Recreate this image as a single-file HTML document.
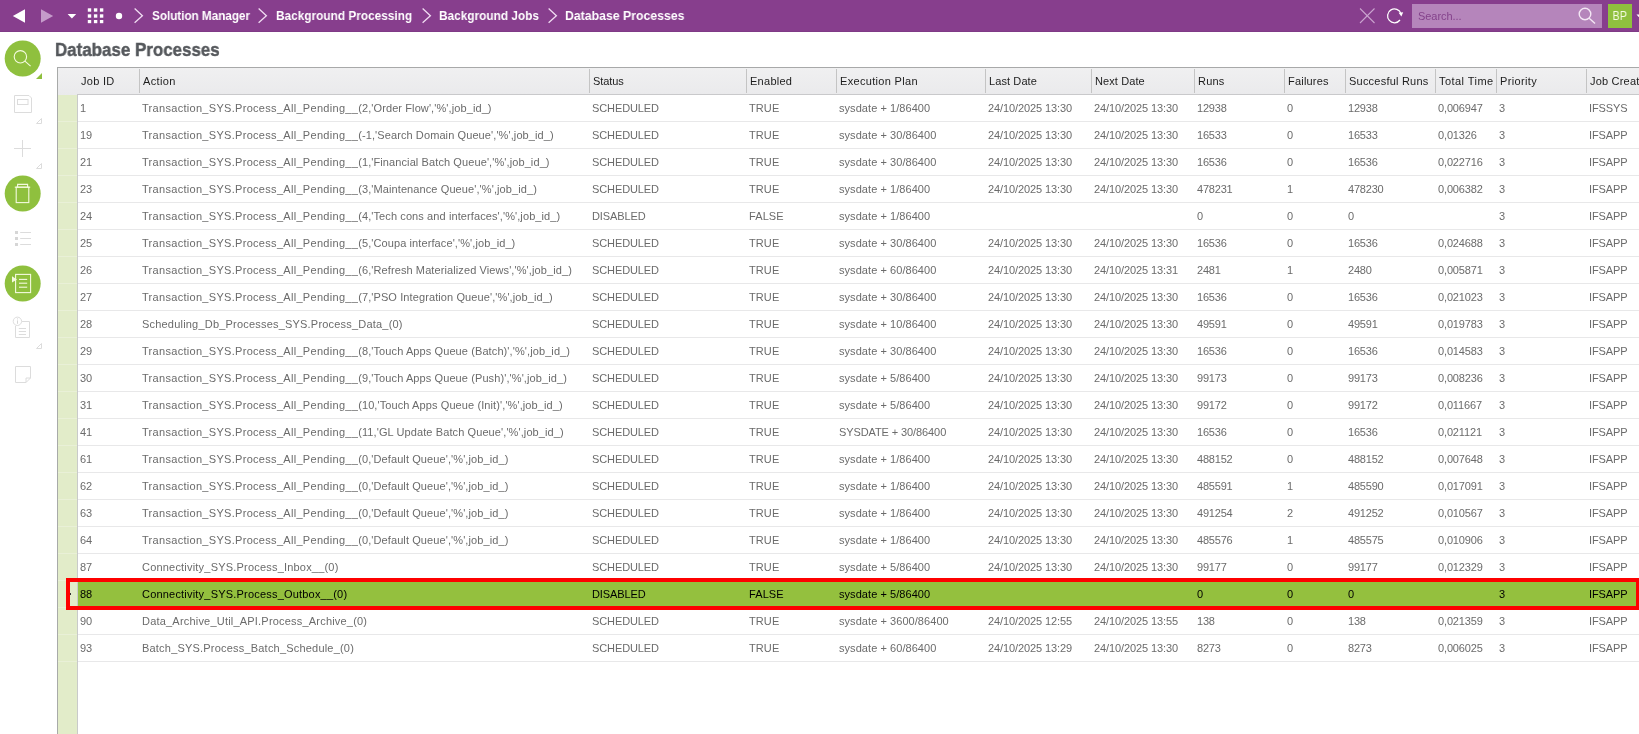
<!DOCTYPE html>
<html><head><meta charset="utf-8"><title>Database Processes</title>
<style>
*{box-sizing:border-box;margin:0;padding:0}
html,body{width:1639px;height:734px;overflow:hidden;background:#fff;font-family:"Liberation Sans",Arial,sans-serif;font-size:11px;color:#6b6b6b}
#top{position:absolute;left:0;top:0;width:1639px;height:32px;background:#873e8d;border-bottom:1px solid #7f3a86}
#top svg{position:absolute;left:0;top:0;z-index:2}
.bc{position:absolute;top:8px;height:16px;line-height:16px;font-weight:bold;font-size:13.5px;color:#fff;white-space:nowrap;transform-origin:0 50%;transform:scaleX(.877)}
#search{position:absolute;left:1412px;top:4px;width:190px;height:24px;background:#b585bb}
#search span{position:absolute;left:6px;top:3.5px;font-size:11px;line-height:16px;color:#84428b;letter-spacing:-.05px}
#user{position:absolute;left:1608px;top:4px;width:24px;height:24px;background:#8fc03e;color:#f4fbe2;font-size:13px;line-height:24px;text-align:center}
#user span{display:inline-block;transform:scaleX(.82)}
#title{position:absolute;left:55px;top:37px;height:26px;line-height:26px;font-size:19.2px;font-weight:bold;color:#55585c;white-space:nowrap;transform-origin:0 50%;transform:scaleX(.882);-webkit-text-stroke:.45px #55585c}
#side{position:absolute;left:0;top:32px;width:56px;height:702px}
#side svg{position:absolute;left:0;top:0}
#grid{position:absolute;left:57px;top:67px;width:1582px;height:667px;border-left:1px solid #a8aaa9;border-top:1px solid #a8a9a9;background:#fff}
.thead{position:absolute;left:0;top:0;width:1581px;height:27px;background:linear-gradient(#f0f0f1,#eaeaec)}
.h{position:absolute;top:5px;line-height:16px;font-size:11px;color:#1d1d1d;white-space:nowrap}
.hs{position:absolute;top:1px;width:1px;height:24px;background:#c4c4c4}
#marker{position:absolute;left:58px;top:95px;width:19px;height:639px;background:#e2ecc9}
#bodyb{position:absolute;left:77px;top:94px;width:1562px;height:640px;border-left:1px solid #c9caca;border-top:1px solid #c9c9cb}
.row{position:absolute;left:78px;width:1561px;height:27px;border-bottom:1px solid #e8e8e9}
.row::before{content:"";position:absolute;left:-20px;bottom:-1px;width:19px;height:1px;background:#e9f0d7}
.row,.h,.bc,#title,#search span,#user span{will-change:transform}
.c{position:absolute;top:5px;line-height:16px;white-space:nowrap}
.p{letter-spacing:.3px}
.sel{background:#94c03e;color:#000;border-bottom-color:#94c03e}
#red{position:absolute;left:66px;top:578px;width:1574px;height:32px;border:4px solid #fe0000}
</style></head><body>
<div id="top">
<svg width="1639" height="31" viewBox="0 0 1639 31">
<polygon points="25,9.2 25,22.8 12.8,16" fill="#fff"/>
<polygon points="41,9.2 41,22.8 53.2,16" fill="#c59bca"/>
<polygon points="67.6,14 76.2,14 71.9,18.4" fill="#fff"/>
<g fill="#fff">
<rect x="87.8" y="8.3" width="3.4" height="3.4"/><rect x="93.9" y="8.3" width="3.4" height="3.4"/><rect x="99.9" y="8.3" width="3.4" height="3.4"/>
<rect x="87.8" y="14.3" width="3.4" height="3.4"/><rect x="93.9" y="14.3" width="3.4" height="3.4"/><rect x="99.9" y="14.3" width="3.4" height="3.4"/>
<rect x="87.8" y="20" width="3.4" height="3.2"/><rect x="93.9" y="20" width="3.4" height="3.2"/><rect x="99.9" y="20" width="3.4" height="3.2"/>
</g>
<circle cx="119" cy="16" r="3.2" fill="#fff"/>
<g fill="none" stroke="#f0dcf2" stroke-width="1.3">
<polyline points="134.6,8.6 142.4,15.7 134.6,22.8"/>
<polyline points="258.6,8.6 266.4,15.7 258.6,22.8"/>
<polyline points="422.6,8.6 430.4,15.7 422.6,22.8"/>
<polyline points="548.6,8.6 556.4,15.7 548.6,22.8"/>
</g>
<g stroke="#caa4cf" stroke-width="1.1" fill="none"><line x1="1360" y1="8.5" x2="1374.5" y2="23"/><line x1="1374.5" y1="8.5" x2="1360" y2="23"/></g>
<path d="M1401.0,13.6 A6.9,6.9 0 1 0 1400.0,20.0" fill="none" stroke="#fff" stroke-width="1.25"/>
<polygon points="1398.6,12.8 1403.2,12.2 1401.4,16.4" fill="#fff"/>
<g fill="none" stroke="#f3e6f4" stroke-width="1.4"><circle cx="1585" cy="14" r="5.8"/><line x1="1589.2" y1="18.2" x2="1595" y2="23.6"/></g>
<polygon points="1636.5,14.5 1641,14.5 1638.7,17" fill="#fff"/>

</svg>
<span class="bc" style="left:151.8px;letter-spacing:-.1px">Solution Manager</span>
<span class="bc" style="left:275.8px">Background Processing</span>
<span class="bc" style="left:438.8px">Background Jobs</span>
<span class="bc" style="left:565px;transform:scaleX(.91)">Database Processes</span>
<div id="search"><span>Search...</span></div>
<div id="user"><span>BP</span></div>
</div>
<div id="title">Database Processes</div>
<div id="side"><svg width="56" height="702" viewBox="0 32 56 702">
<g fill="#8fc03e"><circle cx="22.7" cy="58.5" r="18"/><circle cx="22.7" cy="193.5" r="18"/><circle cx="22.7" cy="283.5" r="18"/>
<polygon points="42,73 42,79 36,79"/></g>
<g fill="none" stroke="#f4fadf" stroke-width="1.1">
<circle cx="20.4" cy="56.8" r="6.2"/><line x1="24.9" y1="61.2" x2="30.6" y2="66.2"/>
<rect x="16.2" y="187.2" width="12.6" height="15.4"/><line x1="14.8" y1="187.2" x2="30.2" y2="187.2"/><polyline points="17.6,187.2 17.6,184.4 27.6,184.4 27.6,187.2"/>
<rect x="15.6" y="274.4" width="15" height="18.2"/><line x1="19" y1="279.4" x2="27.2" y2="279.4"/><line x1="19" y1="283.2" x2="27.2" y2="283.2"/><line x1="19" y1="287.2" x2="27.2" y2="287.2"/>
</g>
<polygon points="12,276.2 17,279.4 12,282.6" fill="#f4fadf"/>
<g fill="none" stroke="#dcdcdc" stroke-width="1">
<path d="M14.5,95.5 H29 L31.5,98 V112.5 H14.5 Z"/><rect x="17.5" y="99.5" width="10.5" height="5"/>
<polygon points="41.5,118.5 41.5,123.5 36.5,123.5"/>
<line x1="22.5" y1="140" x2="22.5" y2="157"/><line x1="14" y1="148.5" x2="31" y2="148.5"/>
<polygon points="41.5,163.5 41.5,168.5 36.5,168.5"/>
<line x1="20.2" y1="232.5" x2="31" y2="232.5"/><line x1="20.2" y1="238.5" x2="31" y2="238.5"/><line x1="20.2" y1="244.5" x2="31" y2="244.5"/>
<path d="M22,321.5 H29.5 V337.5 H15.5 V326"/><circle cx="17.4" cy="321.3" r="4.2" fill="#fff"/>
<line x1="18.8" y1="328.5" x2="26" y2="328.5"/><line x1="18.8" y1="331.5" x2="26" y2="331.5"/><line x1="18.8" y1="334.5" x2="26" y2="334.5"/>
<polygon points="41.5,343.5 41.5,348.5 36.5,348.5"/>
<path d="M15.5,366.5 H30.5 V378 L26,382.5 H15.5 Z"/><path d="M30.5,378 H26 V382.5"/>
</g>
<g fill="#d6d6d6"><rect x="15" y="231" width="3" height="3"/><rect x="15" y="237" width="3" height="3"/><rect x="15" y="243" width="3" height="3"/>
<rect x="17" y="320.4" width="1" height="3.4"/><rect x="17" y="318.4" width="1" height="1"/></g>

</svg></div>
<div id="grid">
<div class="thead">
<span class="h" style="left:23px;letter-spacing:0.3px">Job ID</span>
<i class="hs" style="left:81px"></i><span class="h" style="left:85px;letter-spacing:0.37px">Action</span>
<i class="hs" style="left:531px"></i><span class="h" style="left:535px;letter-spacing:-0.1px">Status</span>
<i class="hs" style="left:688px"></i><span class="h" style="left:692px;letter-spacing:0.27px">Enabled</span>
<i class="hs" style="left:778px"></i><span class="h" style="left:782px;letter-spacing:0.32px">Execution Plan</span>
<i class="hs" style="left:927px"></i><span class="h" style="left:931px;letter-spacing:0.1px">Last Date</span>
<i class="hs" style="left:1033px"></i><span class="h" style="left:1037px;letter-spacing:0.1px">Next Date</span>
<i class="hs" style="left:1136px"></i><span class="h" style="left:1140px;letter-spacing:0.2px">Runs</span>
<i class="hs" style="left:1226px"></i><span class="h" style="left:1230px;letter-spacing:0.2px">Failures</span>
<i class="hs" style="left:1287px"></i><span class="h" style="left:1291px;letter-spacing:0.22px">Succesful Runs</span>
<i class="hs" style="left:1377px"></i><span class="h" style="left:1381px;letter-spacing:0.45px">Total Time</span>
<i class="hs" style="left:1438px"></i><span class="h" style="left:1442px;letter-spacing:0.35px">Priority</span>
<i class="hs" style="left:1528px"></i><span class="h" style="left:1532px;letter-spacing:0.2px">Job Creator</span>
</div>
</div>
<div id="marker"></div>
<div id="bodyb"></div>

<div class="row" style="top:95px">
<span class="c" style="left:2px;letter-spacing:-0.1px">1</span>
<span class="c" style="left:64px;letter-spacing:.1px"><span class="p">Transaction_SYS.Process_All_Pending__</span>(2,'Order Flow','%',job_id_)</span>
<span class="c" style="left:514px;letter-spacing:-0.1px">SCHEDULED</span>
<span class="c" style="left:671px;letter-spacing:0.1px">TRUE</span>
<span class="c" style="left:761px;letter-spacing:0.06px">sysdate + 1/86400</span>
<span class="c" style="left:910px;letter-spacing:-0.1px">24/10/2025 13:30</span>
<span class="c" style="left:1016px;letter-spacing:-0.1px">24/10/2025 13:30</span>
<span class="c" style="left:1119px;letter-spacing:-0.2px">12938</span>
<span class="c" style="left:1209px;letter-spacing:0px">0</span>
<span class="c" style="left:1270px;letter-spacing:-0.2px">12938</span>
<span class="c" style="left:1360px;letter-spacing:-0.14px">0,006947</span>
<span class="c" style="left:1421px;letter-spacing:0px">3</span>
<span class="c" style="left:1511px;letter-spacing:-0.12px">IFSSYS</span>
</div>
<div class="row" style="top:122px">
<span class="c" style="left:2px;letter-spacing:-0.1px">19</span>
<span class="c" style="left:64px;letter-spacing:.1px"><span class="p">Transaction_SYS.Process_All_Pending__</span>(-1,'Search Domain Queue','%',job_id_)</span>
<span class="c" style="left:514px;letter-spacing:-0.1px">SCHEDULED</span>
<span class="c" style="left:671px;letter-spacing:0.1px">TRUE</span>
<span class="c" style="left:761px;letter-spacing:0.06px">sysdate + 30/86400</span>
<span class="c" style="left:910px;letter-spacing:-0.1px">24/10/2025 13:30</span>
<span class="c" style="left:1016px;letter-spacing:-0.1px">24/10/2025 13:30</span>
<span class="c" style="left:1119px;letter-spacing:-0.2px">16533</span>
<span class="c" style="left:1209px;letter-spacing:0px">0</span>
<span class="c" style="left:1270px;letter-spacing:-0.2px">16533</span>
<span class="c" style="left:1360px;letter-spacing:-0.14px">0,01326</span>
<span class="c" style="left:1421px;letter-spacing:0px">3</span>
<span class="c" style="left:1511px;letter-spacing:-0.12px">IFSAPP</span>
</div>
<div class="row" style="top:149px">
<span class="c" style="left:2px;letter-spacing:-0.1px">21</span>
<span class="c" style="left:64px;letter-spacing:.1px"><span class="p">Transaction_SYS.Process_All_Pending__</span>(1,'Financial Batch Queue','%',job_id_)</span>
<span class="c" style="left:514px;letter-spacing:-0.1px">SCHEDULED</span>
<span class="c" style="left:671px;letter-spacing:0.1px">TRUE</span>
<span class="c" style="left:761px;letter-spacing:0.06px">sysdate + 30/86400</span>
<span class="c" style="left:910px;letter-spacing:-0.1px">24/10/2025 13:30</span>
<span class="c" style="left:1016px;letter-spacing:-0.1px">24/10/2025 13:30</span>
<span class="c" style="left:1119px;letter-spacing:-0.2px">16536</span>
<span class="c" style="left:1209px;letter-spacing:0px">0</span>
<span class="c" style="left:1270px;letter-spacing:-0.2px">16536</span>
<span class="c" style="left:1360px;letter-spacing:-0.14px">0,022716</span>
<span class="c" style="left:1421px;letter-spacing:0px">3</span>
<span class="c" style="left:1511px;letter-spacing:-0.12px">IFSAPP</span>
</div>
<div class="row" style="top:176px">
<span class="c" style="left:2px;letter-spacing:-0.1px">23</span>
<span class="c" style="left:64px;letter-spacing:.1px"><span class="p">Transaction_SYS.Process_All_Pending__</span>(3,'Maintenance Queue','%',job_id_)</span>
<span class="c" style="left:514px;letter-spacing:-0.1px">SCHEDULED</span>
<span class="c" style="left:671px;letter-spacing:0.1px">TRUE</span>
<span class="c" style="left:761px;letter-spacing:0.06px">sysdate + 1/86400</span>
<span class="c" style="left:910px;letter-spacing:-0.1px">24/10/2025 13:30</span>
<span class="c" style="left:1016px;letter-spacing:-0.1px">24/10/2025 13:30</span>
<span class="c" style="left:1119px;letter-spacing:-0.2px">478231</span>
<span class="c" style="left:1209px;letter-spacing:0px">1</span>
<span class="c" style="left:1270px;letter-spacing:-0.2px">478230</span>
<span class="c" style="left:1360px;letter-spacing:-0.14px">0,006382</span>
<span class="c" style="left:1421px;letter-spacing:0px">3</span>
<span class="c" style="left:1511px;letter-spacing:-0.12px">IFSAPP</span>
</div>
<div class="row" style="top:203px">
<span class="c" style="left:2px;letter-spacing:-0.1px">24</span>
<span class="c" style="left:64px;letter-spacing:.1px"><span class="p">Transaction_SYS.Process_All_Pending__</span>(4,'Tech cons and interfaces','%',job_id_)</span>
<span class="c" style="left:514px;letter-spacing:-0.1px">DISABLED</span>
<span class="c" style="left:671px;letter-spacing:0.1px">FALSE</span>
<span class="c" style="left:761px;letter-spacing:0.06px">sysdate + 1/86400</span>
<span class="c" style="left:1119px;letter-spacing:-0.2px">0</span>
<span class="c" style="left:1209px;letter-spacing:0px">0</span>
<span class="c" style="left:1270px;letter-spacing:-0.2px">0</span>
<span class="c" style="left:1421px;letter-spacing:0px">3</span>
<span class="c" style="left:1511px;letter-spacing:-0.12px">IFSAPP</span>
</div>
<div class="row" style="top:230px">
<span class="c" style="left:2px;letter-spacing:-0.1px">25</span>
<span class="c" style="left:64px;letter-spacing:.1px"><span class="p">Transaction_SYS.Process_All_Pending__</span>(5,'Coupa interface','%',job_id_)</span>
<span class="c" style="left:514px;letter-spacing:-0.1px">SCHEDULED</span>
<span class="c" style="left:671px;letter-spacing:0.1px">TRUE</span>
<span class="c" style="left:761px;letter-spacing:0.06px">sysdate + 30/86400</span>
<span class="c" style="left:910px;letter-spacing:-0.1px">24/10/2025 13:30</span>
<span class="c" style="left:1016px;letter-spacing:-0.1px">24/10/2025 13:30</span>
<span class="c" style="left:1119px;letter-spacing:-0.2px">16536</span>
<span class="c" style="left:1209px;letter-spacing:0px">0</span>
<span class="c" style="left:1270px;letter-spacing:-0.2px">16536</span>
<span class="c" style="left:1360px;letter-spacing:-0.14px">0,024688</span>
<span class="c" style="left:1421px;letter-spacing:0px">3</span>
<span class="c" style="left:1511px;letter-spacing:-0.12px">IFSAPP</span>
</div>
<div class="row" style="top:257px">
<span class="c" style="left:2px;letter-spacing:-0.1px">26</span>
<span class="c" style="left:64px;letter-spacing:.1px"><span class="p">Transaction_SYS.Process_All_Pending__</span>(6,'Refresh Materialized Views','%',job_id_)</span>
<span class="c" style="left:514px;letter-spacing:-0.1px">SCHEDULED</span>
<span class="c" style="left:671px;letter-spacing:0.1px">TRUE</span>
<span class="c" style="left:761px;letter-spacing:0.06px">sysdate + 60/86400</span>
<span class="c" style="left:910px;letter-spacing:-0.1px">24/10/2025 13:30</span>
<span class="c" style="left:1016px;letter-spacing:-0.1px">24/10/2025 13:31</span>
<span class="c" style="left:1119px;letter-spacing:-0.2px">2481</span>
<span class="c" style="left:1209px;letter-spacing:0px">1</span>
<span class="c" style="left:1270px;letter-spacing:-0.2px">2480</span>
<span class="c" style="left:1360px;letter-spacing:-0.14px">0,005871</span>
<span class="c" style="left:1421px;letter-spacing:0px">3</span>
<span class="c" style="left:1511px;letter-spacing:-0.12px">IFSAPP</span>
</div>
<div class="row" style="top:284px">
<span class="c" style="left:2px;letter-spacing:-0.1px">27</span>
<span class="c" style="left:64px;letter-spacing:.1px"><span class="p">Transaction_SYS.Process_All_Pending__</span>(7,'PSO Integration Queue','%',job_id_)</span>
<span class="c" style="left:514px;letter-spacing:-0.1px">SCHEDULED</span>
<span class="c" style="left:671px;letter-spacing:0.1px">TRUE</span>
<span class="c" style="left:761px;letter-spacing:0.06px">sysdate + 30/86400</span>
<span class="c" style="left:910px;letter-spacing:-0.1px">24/10/2025 13:30</span>
<span class="c" style="left:1016px;letter-spacing:-0.1px">24/10/2025 13:30</span>
<span class="c" style="left:1119px;letter-spacing:-0.2px">16536</span>
<span class="c" style="left:1209px;letter-spacing:0px">0</span>
<span class="c" style="left:1270px;letter-spacing:-0.2px">16536</span>
<span class="c" style="left:1360px;letter-spacing:-0.14px">0,021023</span>
<span class="c" style="left:1421px;letter-spacing:0px">3</span>
<span class="c" style="left:1511px;letter-spacing:-0.12px">IFSAPP</span>
</div>
<div class="row" style="top:311px">
<span class="c" style="left:2px;letter-spacing:-0.1px">28</span>
<span class="c" style="left:64px;letter-spacing:0.2px">Scheduling_Db_Processes_SYS.Process_Data_(0)</span>
<span class="c" style="left:514px;letter-spacing:-0.1px">SCHEDULED</span>
<span class="c" style="left:671px;letter-spacing:0.1px">TRUE</span>
<span class="c" style="left:761px;letter-spacing:0.06px">sysdate + 10/86400</span>
<span class="c" style="left:910px;letter-spacing:-0.1px">24/10/2025 13:30</span>
<span class="c" style="left:1016px;letter-spacing:-0.1px">24/10/2025 13:30</span>
<span class="c" style="left:1119px;letter-spacing:-0.2px">49591</span>
<span class="c" style="left:1209px;letter-spacing:0px">0</span>
<span class="c" style="left:1270px;letter-spacing:-0.2px">49591</span>
<span class="c" style="left:1360px;letter-spacing:-0.14px">0,019783</span>
<span class="c" style="left:1421px;letter-spacing:0px">3</span>
<span class="c" style="left:1511px;letter-spacing:-0.12px">IFSAPP</span>
</div>
<div class="row" style="top:338px">
<span class="c" style="left:2px;letter-spacing:-0.1px">29</span>
<span class="c" style="left:64px;letter-spacing:.1px"><span class="p">Transaction_SYS.Process_All_Pending__</span>(8,'Touch Apps Queue (Batch)','%',job_id_)</span>
<span class="c" style="left:514px;letter-spacing:-0.1px">SCHEDULED</span>
<span class="c" style="left:671px;letter-spacing:0.1px">TRUE</span>
<span class="c" style="left:761px;letter-spacing:0.06px">sysdate + 30/86400</span>
<span class="c" style="left:910px;letter-spacing:-0.1px">24/10/2025 13:30</span>
<span class="c" style="left:1016px;letter-spacing:-0.1px">24/10/2025 13:30</span>
<span class="c" style="left:1119px;letter-spacing:-0.2px">16536</span>
<span class="c" style="left:1209px;letter-spacing:0px">0</span>
<span class="c" style="left:1270px;letter-spacing:-0.2px">16536</span>
<span class="c" style="left:1360px;letter-spacing:-0.14px">0,014583</span>
<span class="c" style="left:1421px;letter-spacing:0px">3</span>
<span class="c" style="left:1511px;letter-spacing:-0.12px">IFSAPP</span>
</div>
<div class="row" style="top:365px">
<span class="c" style="left:2px;letter-spacing:-0.1px">30</span>
<span class="c" style="left:64px;letter-spacing:.1px"><span class="p">Transaction_SYS.Process_All_Pending__</span>(9,'Touch Apps Queue (Push)','%',job_id_)</span>
<span class="c" style="left:514px;letter-spacing:-0.1px">SCHEDULED</span>
<span class="c" style="left:671px;letter-spacing:0.1px">TRUE</span>
<span class="c" style="left:761px;letter-spacing:0.06px">sysdate + 5/86400</span>
<span class="c" style="left:910px;letter-spacing:-0.1px">24/10/2025 13:30</span>
<span class="c" style="left:1016px;letter-spacing:-0.1px">24/10/2025 13:30</span>
<span class="c" style="left:1119px;letter-spacing:-0.2px">99173</span>
<span class="c" style="left:1209px;letter-spacing:0px">0</span>
<span class="c" style="left:1270px;letter-spacing:-0.2px">99173</span>
<span class="c" style="left:1360px;letter-spacing:-0.14px">0,008236</span>
<span class="c" style="left:1421px;letter-spacing:0px">3</span>
<span class="c" style="left:1511px;letter-spacing:-0.12px">IFSAPP</span>
</div>
<div class="row" style="top:392px">
<span class="c" style="left:2px;letter-spacing:-0.1px">31</span>
<span class="c" style="left:64px;letter-spacing:.1px"><span class="p">Transaction_SYS.Process_All_Pending__</span>(10,'Touch Apps Queue (Init)','%',job_id_)</span>
<span class="c" style="left:514px;letter-spacing:-0.1px">SCHEDULED</span>
<span class="c" style="left:671px;letter-spacing:0.1px">TRUE</span>
<span class="c" style="left:761px;letter-spacing:0.06px">sysdate + 5/86400</span>
<span class="c" style="left:910px;letter-spacing:-0.1px">24/10/2025 13:30</span>
<span class="c" style="left:1016px;letter-spacing:-0.1px">24/10/2025 13:30</span>
<span class="c" style="left:1119px;letter-spacing:-0.2px">99172</span>
<span class="c" style="left:1209px;letter-spacing:0px">0</span>
<span class="c" style="left:1270px;letter-spacing:-0.2px">99172</span>
<span class="c" style="left:1360px;letter-spacing:-0.14px">0,011667</span>
<span class="c" style="left:1421px;letter-spacing:0px">3</span>
<span class="c" style="left:1511px;letter-spacing:-0.12px">IFSAPP</span>
</div>
<div class="row" style="top:419px">
<span class="c" style="left:2px;letter-spacing:-0.1px">41</span>
<span class="c" style="left:64px;letter-spacing:.1px"><span class="p">Transaction_SYS.Process_All_Pending__</span>(11,'GL Update Batch Queue','%',job_id_)</span>
<span class="c" style="left:514px;letter-spacing:-0.1px">SCHEDULED</span>
<span class="c" style="left:671px;letter-spacing:0.1px">TRUE</span>
<span class="c" style="left:761px;letter-spacing:-.1px">SYSDATE + 30/86400</span>
<span class="c" style="left:910px;letter-spacing:-0.1px">24/10/2025 13:30</span>
<span class="c" style="left:1016px;letter-spacing:-0.1px">24/10/2025 13:30</span>
<span class="c" style="left:1119px;letter-spacing:-0.2px">16536</span>
<span class="c" style="left:1209px;letter-spacing:0px">0</span>
<span class="c" style="left:1270px;letter-spacing:-0.2px">16536</span>
<span class="c" style="left:1360px;letter-spacing:-0.14px">0,021121</span>
<span class="c" style="left:1421px;letter-spacing:0px">3</span>
<span class="c" style="left:1511px;letter-spacing:-0.12px">IFSAPP</span>
</div>
<div class="row" style="top:446px">
<span class="c" style="left:2px;letter-spacing:-0.1px">61</span>
<span class="c" style="left:64px;letter-spacing:.1px"><span class="p">Transaction_SYS.Process_All_Pending__</span>(0,'Default Queue','%',job_id_)</span>
<span class="c" style="left:514px;letter-spacing:-0.1px">SCHEDULED</span>
<span class="c" style="left:671px;letter-spacing:0.1px">TRUE</span>
<span class="c" style="left:761px;letter-spacing:0.06px">sysdate + 1/86400</span>
<span class="c" style="left:910px;letter-spacing:-0.1px">24/10/2025 13:30</span>
<span class="c" style="left:1016px;letter-spacing:-0.1px">24/10/2025 13:30</span>
<span class="c" style="left:1119px;letter-spacing:-0.2px">488152</span>
<span class="c" style="left:1209px;letter-spacing:0px">0</span>
<span class="c" style="left:1270px;letter-spacing:-0.2px">488152</span>
<span class="c" style="left:1360px;letter-spacing:-0.14px">0,007648</span>
<span class="c" style="left:1421px;letter-spacing:0px">3</span>
<span class="c" style="left:1511px;letter-spacing:-0.12px">IFSAPP</span>
</div>
<div class="row" style="top:473px">
<span class="c" style="left:2px;letter-spacing:-0.1px">62</span>
<span class="c" style="left:64px;letter-spacing:.1px"><span class="p">Transaction_SYS.Process_All_Pending__</span>(0,'Default Queue','%',job_id_)</span>
<span class="c" style="left:514px;letter-spacing:-0.1px">SCHEDULED</span>
<span class="c" style="left:671px;letter-spacing:0.1px">TRUE</span>
<span class="c" style="left:761px;letter-spacing:0.06px">sysdate + 1/86400</span>
<span class="c" style="left:910px;letter-spacing:-0.1px">24/10/2025 13:30</span>
<span class="c" style="left:1016px;letter-spacing:-0.1px">24/10/2025 13:30</span>
<span class="c" style="left:1119px;letter-spacing:-0.2px">485591</span>
<span class="c" style="left:1209px;letter-spacing:0px">1</span>
<span class="c" style="left:1270px;letter-spacing:-0.2px">485590</span>
<span class="c" style="left:1360px;letter-spacing:-0.14px">0,017091</span>
<span class="c" style="left:1421px;letter-spacing:0px">3</span>
<span class="c" style="left:1511px;letter-spacing:-0.12px">IFSAPP</span>
</div>
<div class="row" style="top:500px">
<span class="c" style="left:2px;letter-spacing:-0.1px">63</span>
<span class="c" style="left:64px;letter-spacing:.1px"><span class="p">Transaction_SYS.Process_All_Pending__</span>(0,'Default Queue','%',job_id_)</span>
<span class="c" style="left:514px;letter-spacing:-0.1px">SCHEDULED</span>
<span class="c" style="left:671px;letter-spacing:0.1px">TRUE</span>
<span class="c" style="left:761px;letter-spacing:0.06px">sysdate + 1/86400</span>
<span class="c" style="left:910px;letter-spacing:-0.1px">24/10/2025 13:30</span>
<span class="c" style="left:1016px;letter-spacing:-0.1px">24/10/2025 13:30</span>
<span class="c" style="left:1119px;letter-spacing:-0.2px">491254</span>
<span class="c" style="left:1209px;letter-spacing:0px">2</span>
<span class="c" style="left:1270px;letter-spacing:-0.2px">491252</span>
<span class="c" style="left:1360px;letter-spacing:-0.14px">0,010567</span>
<span class="c" style="left:1421px;letter-spacing:0px">3</span>
<span class="c" style="left:1511px;letter-spacing:-0.12px">IFSAPP</span>
</div>
<div class="row" style="top:527px">
<span class="c" style="left:2px;letter-spacing:-0.1px">64</span>
<span class="c" style="left:64px;letter-spacing:.1px"><span class="p">Transaction_SYS.Process_All_Pending__</span>(0,'Default Queue','%',job_id_)</span>
<span class="c" style="left:514px;letter-spacing:-0.1px">SCHEDULED</span>
<span class="c" style="left:671px;letter-spacing:0.1px">TRUE</span>
<span class="c" style="left:761px;letter-spacing:0.06px">sysdate + 1/86400</span>
<span class="c" style="left:910px;letter-spacing:-0.1px">24/10/2025 13:30</span>
<span class="c" style="left:1016px;letter-spacing:-0.1px">24/10/2025 13:30</span>
<span class="c" style="left:1119px;letter-spacing:-0.2px">485576</span>
<span class="c" style="left:1209px;letter-spacing:0px">1</span>
<span class="c" style="left:1270px;letter-spacing:-0.2px">485575</span>
<span class="c" style="left:1360px;letter-spacing:-0.14px">0,010906</span>
<span class="c" style="left:1421px;letter-spacing:0px">3</span>
<span class="c" style="left:1511px;letter-spacing:-0.12px">IFSAPP</span>
</div>
<div class="row" style="top:554px">
<span class="c" style="left:2px;letter-spacing:-0.1px">87</span>
<span class="c" style="left:64px;letter-spacing:0.2px">Connectivity_SYS.Process_Inbox__(0)</span>
<span class="c" style="left:514px;letter-spacing:-0.1px">SCHEDULED</span>
<span class="c" style="left:671px;letter-spacing:0.1px">TRUE</span>
<span class="c" style="left:761px;letter-spacing:0.06px">sysdate + 5/86400</span>
<span class="c" style="left:910px;letter-spacing:-0.1px">24/10/2025 13:30</span>
<span class="c" style="left:1016px;letter-spacing:-0.1px">24/10/2025 13:30</span>
<span class="c" style="left:1119px;letter-spacing:-0.2px">99177</span>
<span class="c" style="left:1209px;letter-spacing:0px">0</span>
<span class="c" style="left:1270px;letter-spacing:-0.2px">99177</span>
<span class="c" style="left:1360px;letter-spacing:-0.14px">0,012329</span>
<span class="c" style="left:1421px;letter-spacing:0px">3</span>
<span class="c" style="left:1511px;letter-spacing:-0.12px">IFSAPP</span>
</div>
<div class="row sel" style="top:581px">
<span class="c" style="left:2px;letter-spacing:-0.1px">88</span>
<span class="c" style="left:64px;letter-spacing:0.2px">Connectivity_SYS.Process_Outbox__(0)</span>
<span class="c" style="left:514px;letter-spacing:-0.1px">DISABLED</span>
<span class="c" style="left:671px;letter-spacing:0.1px">FALSE</span>
<span class="c" style="left:761px;letter-spacing:0.06px">sysdate + 5/86400</span>
<span class="c" style="left:1119px;letter-spacing:-0.2px">0</span>
<span class="c" style="left:1209px;letter-spacing:0px">0</span>
<span class="c" style="left:1270px;letter-spacing:-0.2px">0</span>
<span class="c" style="left:1421px;letter-spacing:0px">3</span>
<span class="c" style="left:1511px;letter-spacing:-0.12px">IFSAPP</span>
</div>
<div class="row" style="top:608px">
<span class="c" style="left:2px;letter-spacing:-0.1px">90</span>
<span class="c" style="left:64px;letter-spacing:0.2px">Data_Archive_Util_API.Process_Archive_(0)</span>
<span class="c" style="left:514px;letter-spacing:-0.1px">SCHEDULED</span>
<span class="c" style="left:671px;letter-spacing:0.1px">TRUE</span>
<span class="c" style="left:761px;letter-spacing:0.06px">sysdate + 3600/86400</span>
<span class="c" style="left:910px;letter-spacing:-0.1px">24/10/2025 12:55</span>
<span class="c" style="left:1016px;letter-spacing:-0.1px">24/10/2025 13:55</span>
<span class="c" style="left:1119px;letter-spacing:-0.2px">138</span>
<span class="c" style="left:1209px;letter-spacing:0px">0</span>
<span class="c" style="left:1270px;letter-spacing:-0.2px">138</span>
<span class="c" style="left:1360px;letter-spacing:-0.14px">0,021359</span>
<span class="c" style="left:1421px;letter-spacing:0px">3</span>
<span class="c" style="left:1511px;letter-spacing:-0.12px">IFSAPP</span>
</div>
<div class="row" style="top:635px">
<span class="c" style="left:2px;letter-spacing:-0.1px">93</span>
<span class="c" style="left:64px;letter-spacing:0.2px">Batch_SYS.Process_Batch_Schedule_(0)</span>
<span class="c" style="left:514px;letter-spacing:-0.1px">SCHEDULED</span>
<span class="c" style="left:671px;letter-spacing:0.1px">TRUE</span>
<span class="c" style="left:761px;letter-spacing:0.06px">sysdate + 60/86400</span>
<span class="c" style="left:910px;letter-spacing:-0.1px">24/10/2025 13:29</span>
<span class="c" style="left:1016px;letter-spacing:-0.1px">24/10/2025 13:30</span>
<span class="c" style="left:1119px;letter-spacing:-0.2px">8273</span>
<span class="c" style="left:1209px;letter-spacing:0px">0</span>
<span class="c" style="left:1270px;letter-spacing:-0.2px">8273</span>
<span class="c" style="left:1360px;letter-spacing:-0.14px">0,006025</span>
<span class="c" style="left:1421px;letter-spacing:0px">3</span>
<span class="c" style="left:1511px;letter-spacing:-0.12px">IFSAPP</span>
</div>
<div id="red"></div>
<div style="position:absolute;left:70px;top:593px;width:1px;height:2px;background:#333"></div>
</body></html>
